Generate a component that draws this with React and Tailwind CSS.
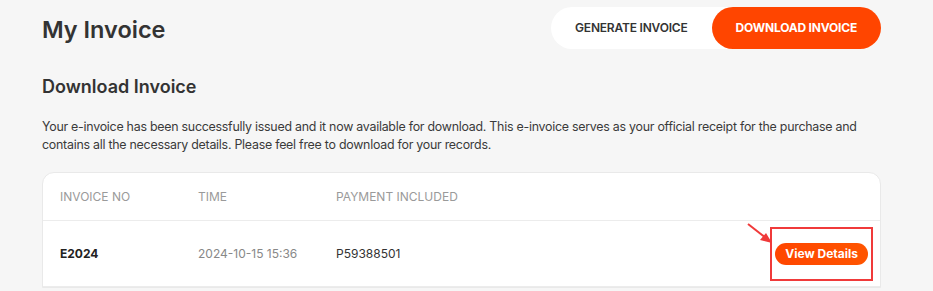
import React from "react";

const font = { fontFamily: "Inter, 'Noto Sans', sans-serif" };

function Arrow() {
  return (
    <svg
      className="absolute left-[-26px] top-[-6px]"
      width="30"
      height="26"
      viewBox="0 0 30 26"
    >
      <line x1="2" y1="1" x2="20" y2="15" stroke="#f03a3a" strokeWidth="2" />
      <polygon points="26,20 14,17 20,10" fill="#f03a3a" />
    </svg>
  );
}

export default function App() {
  return (
    <div
      className="w-[933px] h-[291px] overflow-hidden bg-[#f6f6f6] px-[42px] pt-[7px] text-[#333]"
      style={font}
    >
      {/* header */}
      <div className="flex items-center justify-between pr-[10px]">
        <h1 className="text-[23.5px] font-semibold text-[#333] mt-[3px]">
          My Invoice
        </h1>
        <div className="flex h-[42px] rounded-full bg-white">
          <button className="px-[24px] text-[12px] font-semibold text-[#333] tracking-[-0.2px]">
            GENERATE INVOICE
          </button>
          <button className="rounded-full bg-[#ff4500] px-[24px] text-[12px] font-bold text-white tracking-[-0.2px]">
            DOWNLOAD INVOICE
          </button>
        </div>
      </div>

      <h2 className="mt-[24px] text-[18px] font-semibold text-[#333]">
        Download Invoice
      </h2>

      <p className="mt-[18px] w-[830px] text-[12.4px] leading-[18px] tracking-[-0.25px] text-[#3a3a3a]">
        Your e-invoice has been successfully issued and it now available for download. This
        e-invoice serves as your official receipt for the purchase and contains all the necessary
        details. Please feel free to download for your records.
      </p>

      {/* table card */}
      <div className="mt-[18px] w-[839px] rounded-t-[12px] border border-[#e9e9e9] bg-white">
        <div className="flex h-[48px] items-center border-b border-[#ececec] text-[12px] text-[#9a9a9a]">
          <div className="w-[155px] pl-[17px]">INVOICE NO</div>
          <div className="w-[138px]">TIME</div>
          <div>PAYMENT INCLUDED</div>
        </div>
        <div className="flex h-[66px] items-center border-b border-[#ececec] text-[12px]">
          <div className="w-[155px] pl-[17px] font-bold text-[#222]">E2024</div>
          <div className="w-[138px] text-[#888]">2024-10-15 15:36</div>
          <div className="flex-1 text-[#333]">P59388501</div>
          <div className="relative mr-[7px] border-2 border-[#f03a3a] px-[3px] py-[14px]">
            <Arrow />
            <button className="h-[22px] rounded-full bg-gradient-to-r from-[#ff4500] to-[#ff5500] px-[10px] text-[12px] font-bold text-white">
              View Details
            </button>
          </div>
        </div>
      </div>
    </div>
  );
}
